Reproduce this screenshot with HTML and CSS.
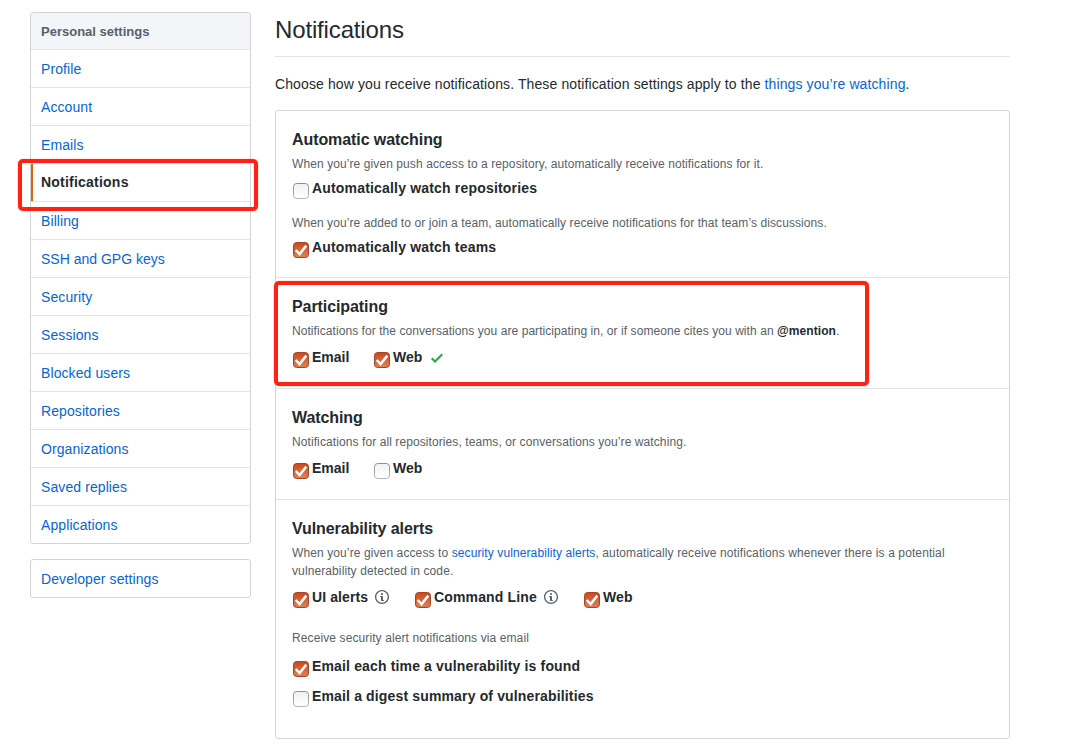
FILE: index.html
```
<!DOCTYPE html>
<html lang="en">
<head>
<meta charset="utf-8">
<title>Notifications</title>
<link rel="stylesheet" href="styles.css">
</head>
<body>
<svg class="defs" width="0" height="0">
  <defs>
    <linearGradient id="on" x1="0" y1="0" x2="0" y2="1"><stop offset="0" stop-color="#c9481c"/><stop offset="1" stop-color="#e28157"/></linearGradient>
    <linearGradient id="off" x1="0" y1="0" x2="0" y2="1"><stop offset="0" stop-color="#f1f1f1"/><stop offset="1" stop-color="#ffffff"/></linearGradient>
    <linearGradient id="rim" x1="0" y1="0" x2="0" y2="1"><stop offset="0" stop-color="#8d8d8d"/><stop offset="1" stop-color="#b5b5b5"/></linearGradient>
    <symbol id="checked" viewBox="0 0 16 16"><rect x=".5" y=".5" width="15" height="15" rx="3.2" fill="url(#on)" stroke="#a34524"/><path d="M2.7 8 6.6 12 13.3 3.6" fill="none" stroke="#fff" stroke-width="2.5"/></symbol>
    <symbol id="unchecked" viewBox="0 0 16 16"><rect x=".5" y=".5" width="15" height="15" rx="3.2" fill="url(#off)" stroke="url(#rim)"/></symbol>
    <symbol id="info" viewBox="0 0 14 16"><path fill-rule="evenodd" d="M6.3 5.69a.942.942 0 0 1-.28-.7c0-.28.09-.52.28-.7.19-.18.42-.28.7-.28.28 0 .52.09.7.28.18.19.28.42.28.7 0 .28-.09.52-.28.7a1 1 0 0 1-.7.3c-.28 0-.52-.11-.7-.3zM8 7.99c-.02-.25-.11-.48-.31-.69-.2-.19-.42-.3-.69-.31H6c-.27.02-.48.13-.69.31-.2.2-.3.44-.31.69h1v3c.02.27.11.5.31.69.2.2.42.31.69.31h1c.27 0 .48-.11.69-.31.2-.19.3-.42.31-.69H8V7.98v.01zM7 2.3c-3.14 0-5.7 2.54-5.7 5.68 0 3.14 2.56 5.7 5.7 5.7s5.7-2.55 5.7-5.7c0-3.15-2.56-5.69-5.7-5.69v.01zM7 .98c3.86 0 7 3.14 7 7s-3.14 7-7 7-7-3.12-7-7 3.14-7 7-7z"/></symbol>
  </defs>
</svg>
<div class="page">
  <aside class="sidebar">
    <nav class="menu">
      <h3 class="menu-heading">Personal settings</h3>
      <a class="menu-item">Profile</a>
      <a class="menu-item">Account</a>
      <a class="menu-item">Emails</a>
      <a class="menu-item selected">Notifications<span class="marker marker-menu"></span></a>
      <a class="menu-item">Billing</a>
      <a class="menu-item tight">SSH and GPG keys</a>
      <a class="menu-item">Security</a>
      <a class="menu-item">Sessions</a>
      <a class="menu-item">Blocked users</a>
      <a class="menu-item">Repositories</a>
      <a class="menu-item">Organizations</a>
      <a class="menu-item">Saved replies</a>
      <a class="menu-item">Applications</a>
    </nav>
    <nav class="menu"><a class="menu-item">Developer settings</a></nav>
  </aside>
  <main class="content">
    <h2 class="title">Notifications</h2>
    <p class="intro">Choose how you receive notifications. These notification settings apply to the <a>things you’re watching</a>.</p>
    <div class="box">
      <section class="section automatic">
        <h4>Automatic watching</h4>
        <p class="note">When you’re given push access to a repository, automatically receive notifications for it.</p>
        <div class="options"><label><svg class="check"><use href="#unchecked"/></svg>Automatically watch repositories</label></div>
        <p class="note second">When you’re added to or join a team, automatically receive notifications for that team’s discussions.</p>
        <div class="options"><label><svg class="check"><use href="#checked"/></svg>Automatically watch teams</label></div>
      </section>
      <section class="section participating">
        <h4>Participating</h4>
        <p class="note">Notifications for the conversations you are participating in, or if someone cites you with an <strong>@mention</strong>.</p>
        <div class="options">
          <label class="email"><svg class="check"><use href="#checked"/></svg>Email</label>
          <label><svg class="check"><use href="#checked"/></svg>Web</label>
          <svg class="saved" viewBox="0 0 12 16"><path fill-rule="evenodd" d="M12 5l-8 8-4-4 1.5-1.5L4 10l6.5-6.5z"/></svg>
        </div>
        <span class="marker marker-section"></span>
      </section>
      <section class="section">
        <h4>Watching</h4>
        <p class="note">Notifications for all repositories, teams, or conversations you’re watching.</p>
        <div class="options">
          <label class="email"><svg class="check"><use href="#checked"/></svg>Email</label>
          <label><svg class="check"><use href="#unchecked"/></svg>Web</label>
        </div>
      </section>
      <section class="section alerts">
        <h4>Vulnerability alerts</h4>
        <p class="note">When you’re given access to <a>security vulnerability alerts</a>, automatically receive notifications whenever there is a potential<br>vulnerability detected in code.</p>
        <div class="options">
          <label class="ui"><svg class="check"><use href="#checked"/></svg>UI alerts<svg class="info"><use href="#info"/></svg></label>
          <label class="cli"><svg class="check"><use href="#checked"/></svg>Command Line<svg class="info"><use href="#info"/></svg></label>
          <label><svg class="check"><use href="#checked"/></svg>Web</label>
        </div>
        <p class="note receive">Receive security alert notifications via email</p>
        <div class="options first"><label><svg class="check"><use href="#checked"/></svg>Email each time a vulnerability is found</label></div>
        <div class="options"><label><svg class="check"><use href="#unchecked"/></svg>Email a digest summary of vulnerabilities</label></div>
      </section>
    </div>
  </main>
</div>
</body>
</html>
```
FILE: styles.css
```
* { box-sizing: border-box; }
body { margin: 0; background: #fff; color: #24292e; font: 14px/20px "Liberation Sans", Arial, sans-serif; overflow: hidden; }
h2, h3, h4, p { margin: 0; }
a { color: #0366d6; text-decoration: none; }
.defs { position: absolute; }
.page { display: flex; gap: 24px; padding: 12px 0 0 30px; height: 751px; }
.sidebar { width: 221px; display: flex; flex-direction: column; gap: 15px; }
.menu { border: 1px solid #d1d5da; border-radius: 3px; }
.menu-heading { height: 37px; padding: 0 10px; border-bottom: 1px solid #e1e4e8; border-radius: 2px 2px 0 0; background: #f3f5f8; color: #586069; font-size: 13px; line-height: 37px; }
.menu-item { display: block; position: relative; height: 38px; padding: 0 10px; border-bottom: 1px solid #e1e4e8; line-height: 39px; letter-spacing: .09px; }
.menu-item:last-child { height: 37px; border-bottom: 0; }
.tight { letter-spacing: 0; }
.selected { color: #24292e; font-weight: bold; line-height: 36px; letter-spacing: .22px; box-shadow: inset 2px 0 #d9640f; }
.marker { position: absolute; z-index: 1; border: 4px solid #ff2113; border-radius: 5px; box-shadow: 0 0 1px #ff2113; pointer-events: none; }
.marker-menu { left: -13px; top: -5px; width: 240px; height: 52px; }
.marker-section { left: -2px; top: 3px; width: 595px; height: 105px; }
.content { width: 735px; }
.title { height: 45px; border-bottom: 1px solid #e1e4e8; font-size: 24px; font-weight: 400; line-height: 36px; letter-spacing: -.15px; }
.intro { margin-top: 17px; letter-spacing: .112px; }
.box { height: 629px; margin-top: 16px; border: 1px solid #d1d5da; border-radius: 3px; }
.section { position: relative; height: 111px; padding: 19px 16px 0; border-bottom: 1px solid #e1e4e8; }
.automatic { height: 167px; }
.alerts { height: 238px; border-bottom: 0; }
.section h4 { font-size: 16px; line-height: 20px; letter-spacing: -.08px; }
.note { margin-top: 5px; color: #586069; font-size: 12px; line-height: 18px; letter-spacing: .09px; }
.participating .note { letter-spacing: .065px; }
.alerts .note { letter-spacing: .105px; }
.note strong { color: #24292e; }
.options { display: flex; height: 20px; margin-top: 7px; font-weight: bold; letter-spacing: .15px; }
.options label { display: flex; white-space: nowrap; }
.automatic .options { margin-top: 5px; letter-spacing: .18px; }
.check { flex: none; width: 16px; height: 16px; margin: 5px 3px 0 1px; }
.automatic .second { margin-top: 16px; letter-spacing: .08px; }
.email { width: 81px; letter-spacing: 0; }
.email + label { letter-spacing: 0; }
.saved { width: 12px; height: 16px; margin: 3px 0 0 9px; fill: #28a745; }
.info { width: 14px; height: 16px; margin: 2px 0 0 7px; fill: #586069; }
.ui { width: 122px; letter-spacing: .1px; }
.cli { width: 169px; }
.receive { margin-top: 22px; }
.options.first { margin-top: 9px; }
.first + .options { margin-top: 10px; }
```
